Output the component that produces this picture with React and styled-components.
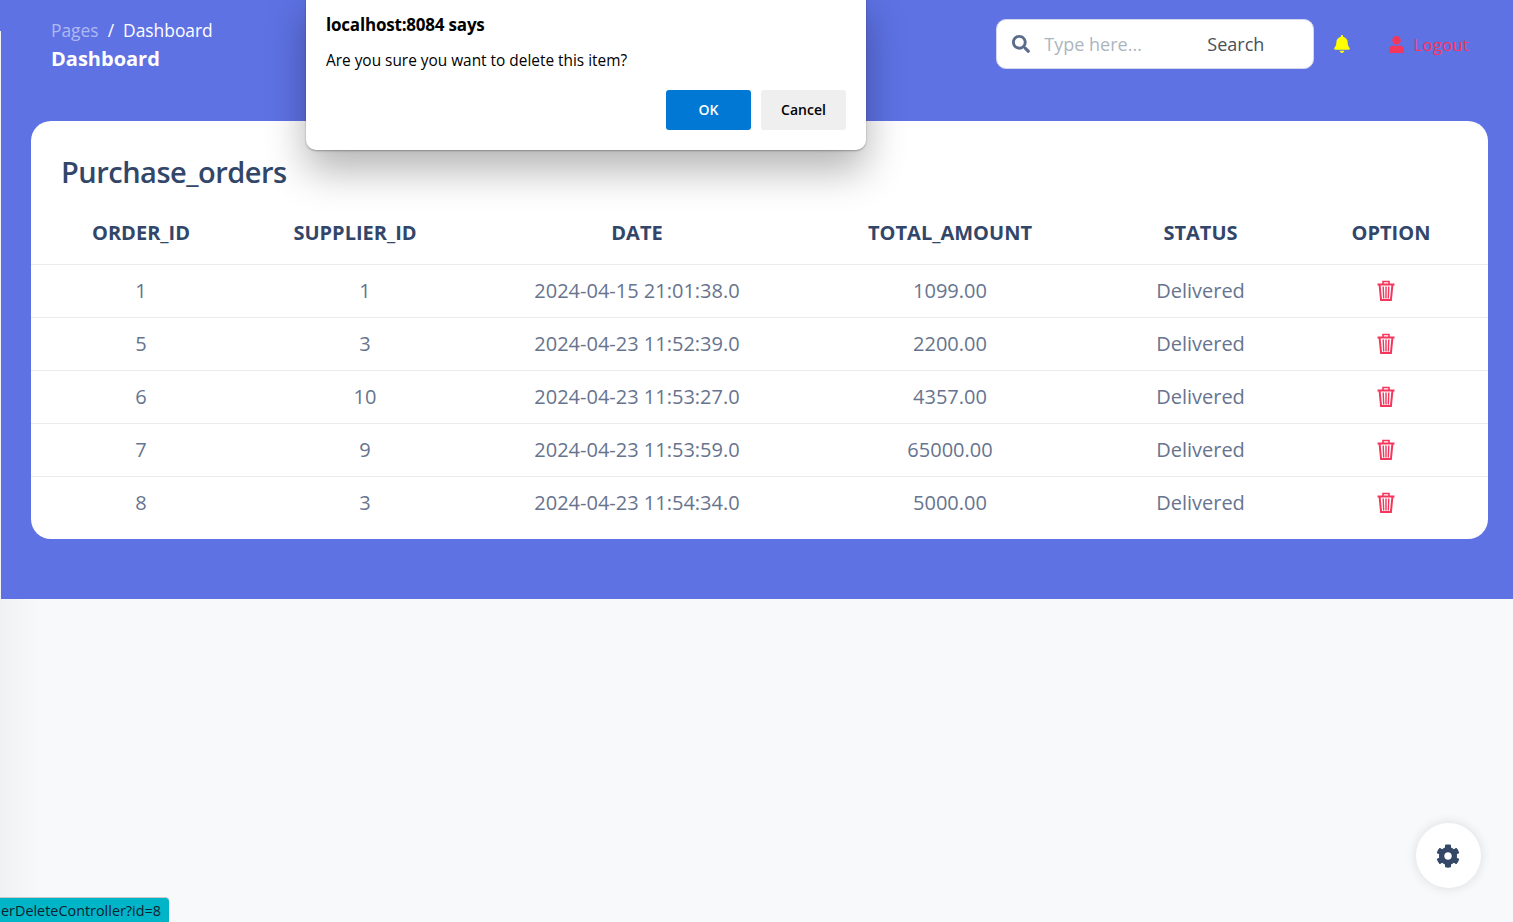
import React from 'react';
import styled, { createGlobalStyle } from 'styled-components';
import { FaBell, FaCog, FaSearch, FaUser } from 'react-icons/fa';

const orders = [
  { id: 1, supplier: 1, date: '2024-04-15 21:01:38.0', total: '1099.00', status: 'Delivered' },
  { id: 5, supplier: 3, date: '2024-04-23 11:52:39.0', total: '2200.00', status: 'Delivered' },
  { id: 6, supplier: 10, date: '2024-04-23 11:53:27.0', total: '4357.00', status: 'Delivered' },
  { id: 7, supplier: 9, date: '2024-04-23 11:53:59.0', total: '65000.00', status: 'Delivered' },
  { id: 8, supplier: 3, date: '2024-04-23 11:54:34.0', total: '5000.00', status: 'Delivered' },
];

const TrashIcon = () => (
  <TrashSvg viewBox="0 0 18 21">
    <path d="M6 4V1.5h6V4" fill="none" stroke="currentColor" strokeWidth="1.6" />
    <path d="M0.5 4.5h17" stroke="currentColor" strokeWidth="2" />
    <path d="M2.6 5l1.5 15h9.8l1.5-15" fill="none" stroke="currentColor" strokeWidth="2" />
    <path d="M6.2 6.5l.5 12M9 6.5v12M11.8 6.5l-.5 12" stroke="currentColor" strokeWidth="1.4" />
  </TrashSvg>
);

const App = () => (
  <Page>
    <GlobalStyle />
    <Banner>
      <TopBar>
        <Crumbs>
          <CrumbLine>
            <CrumbMuted>Pages</CrumbMuted>
            <CrumbSep>/</CrumbSep>
            <span>Dashboard</span>
          </CrumbLine>
          <PageName>Dashboard</PageName>
        </Crumbs>
        <Actions>
          <SearchBox>
            <SearchIcon />
            <Placeholder>Type here...</Placeholder>
            <SearchLabel>Search</SearchLabel>
          </SearchBox>
          <BellIcon />
          <LogoutLink>
            <FaUser size={17} />
            Logout
          </LogoutLink>
        </Actions>
      </TopBar>

      <Card>
        <CardTitle>Purchase_orders</CardTitle>
        <HeadRow>
          <HeadCell>ORDER_ID</HeadCell>
          <HeadCell $shift={20}>SUPPLIER_ID</HeadCell>
          <HeadCell>DATE</HeadCell>
          <HeadCell>TOTAL_AMOUNT</HeadCell>
          <HeadCell>STATUS</HeadCell>
          <HeadCell $shift={2}>OPTION</HeadCell>
        </HeadRow>
        {orders.map((order) => (
          <Row key={order.id}>
            <Cell>{order.id}</Cell>
            <Cell>{order.supplier}</Cell>
            <Cell>{order.date}</Cell>
            <Cell>{order.total}</Cell>
            <Cell>{order.status}</Cell>
            <IconCell>
              <TrashIcon />
            </IconCell>
          </Row>
        ))}
      </Card>
    </Banner>

    {/* Browser confirm dialog */}
    <Dialog>
      <DialogTitle>localhost:8084 says</DialogTitle>
      <DialogText>Are you sure you want to delete this item?</DialogText>
      <DialogButtons>
        <DialogButton $primary>OK</DialogButton>
        <DialogButton>Cancel</DialogButton>
      </DialogButtons>
    </Dialog>

    <SettingsButton>
      <FaCog size={24} />
    </SettingsButton>

    <StatusBar>erDeleteController?id=8</StatusBar>
  </Page>
);

const GlobalStyle = createGlobalStyle`
  html, body {
    margin: 0;
    padding: 0;
    background: #f8f9fa;
  }
`;

const Page = styled.div`
  position: relative;
  height: 922px;
  overflow: hidden;
  padding-left: 1px;
  box-sizing: border-box;
  background:
    linear-gradient(#5e72e4, #5e72e4) 0 0 / 1px 31px no-repeat,
    linear-gradient(90deg, #f0f1f3, #f8f9fa 40px);
  font-family: 'Open Sans', 'Noto Sans', sans-serif;
`;

const Banner = styled.div`
  height: 599px;
  padding: 0 25px 0 30px;
  background: #5e72e4;
`;

const TopBar = styled.div`
  display: flex;
  justify-content: space-between;
  height: 121px;
`;

const Crumbs = styled.div`
  padding: 18px 0 0 20px;
  color: #fff;
`;

const CrumbLine = styled.div`
  display: flex;
  font-size: 17.4px;
  line-height: 25px;
`;

const CrumbMuted = styled.span`
  color: rgba(255, 255, 255, 0.5);
`;

const CrumbSep = styled.span`
  padding: 0 9px;
`;

const PageName = styled.div`
  margin-top: 2px;
  font-size: 20px;
  font-weight: 700;
  line-height: 28px;
`;

const Actions = styled.div`
  display: flex;
  align-items: flex-start;
  padding: 19px 19px 0 0;
`;

const SearchBox = styled.div`
  display: flex;
  align-items: center;
  box-sizing: border-box;
  width: 318px;
  height: 50px;
  padding: 0 15px;
  background: #fff;
  border: 1px solid #d2d6ee;
  border-radius: 10px;
  font-size: 18px;
`;

const SearchIcon = styled(FaSearch)`
  width: 18px;
  height: 18px;
  margin-right: 14px;
  color: #5a6b8c;
`;

const Placeholder = styled.span`
  width: 163px;
  color: #adb5bd;
`;

const SearchLabel = styled.span`
  color: #495057;
`;

const BellIcon = styled(FaBell)`
  width: 18px;
  height: 18px;
  margin: 16px 37px 0 19px;
  color: #ffff00;
`;

const LogoutLink = styled.div`
  display: flex;
  align-items: center;
  gap: 8px;
  height: 50px;
  color: #f5365c;
  font-size: 17.2px;
`;

const Card = styled.div`
  height: 418px;
  background: #fff;
  border-radius: 20px;
`;

const CardTitle = styled.h3`
  margin: 0;
  padding: 31px 0 0 30px;
  color: #32466a;
  font-size: 29px;
  font-weight: 600;
  line-height: 40px;
  letter-spacing: -0.5px;
`;

const HeadRow = styled.div`
  display: grid;
  grid-template-columns: 220px 228px 316px 310px 191px 192px;
  align-items: center;
  height: 72px;
  padding-top: 8px;
  box-sizing: border-box;
`;

const HeadCell = styled.div`
  padding-right: ${({ $shift }) => $shift || 0}px;
  color: #32466a;
  font-size: 20px;
  font-weight: 700;
  text-align: center;
`;

const Row = styled(HeadRow)`
  height: 53px;
  padding-top: 0;
  border-top: 1px solid #e9ecef;
`;

const Cell = styled.div`
  padding-bottom: 2px;
  color: #67748e;
  font-size: 20px;
  text-align: center;
`;

const IconCell = styled.div`
  display: flex;
  justify-content: center;
  padding: 0 12px 2px 0;
`;

const TrashSvg = styled.svg`
  width: 18px;
  height: 21px;
  color: #f5365c;
`;

const Dialog = styled.div`
  position: absolute;
  top: -10px;
  left: 306px;
  box-sizing: border-box;
  width: 560px;
  height: 160px;
  padding: 24px 20px 20px;
  background: #fff;
  border-radius: 10px;
  box-shadow: 0 1px 2px rgba(0, 0, 0, 0.3), 0 20px 40px rgba(0, 0, 0, 0.3);
  color: #000;
`;

const DialogTitle = styled.div`
  font-size: 17px;
  font-weight: 700;
  line-height: 22px;
  letter-spacing: -0.2px;
`;

const DialogText = styled.div`
  margin-top: 14px;
  font-size: 15.4px;
  line-height: 21px;
`;

const DialogButtons = styled.div`
  display: flex;
  justify-content: flex-end;
  gap: 10px;
  margin-top: 19px;
`;

const DialogButton = styled.button`
  width: 85px;
  height: 40px;
  padding: 0 0 2px;
  border: none;
  border-radius: 3px;
  background: ${({ $primary }) => ($primary ? '#0078d4' : '#efefef')};
  color: ${({ $primary }) => ($primary ? '#fff' : '#000')};
  font-family: inherit;
  font-size: 14px;
  font-weight: 600;
`;

const SettingsButton = styled.div`
  position: absolute;
  top: 823px;
  left: 1416px;
  display: flex;
  align-items: center;
  justify-content: center;
  box-sizing: border-box;
  width: 65px;
  height: 65px;
  padding-right: 1px;
  background: #fff;
  border-radius: 50%;
  box-shadow: 0 0 12px rgba(0, 0, 0, 0.12);
  color: #344767;
`;

const StatusBar = styled.div`
  position: absolute;
  left: 0;
  bottom: 0;
  box-sizing: border-box;
  width: 169px;
  height: 25px;
  padding-left: 1px;
  background: #00b5c8;
  border-top: 1px solid #c8c8c8;
  border-top-right-radius: 4px;
  color: #102030;
  font-size: 14.4px;
  line-height: 26px;
  white-space: nowrap;
`;

export default App;
